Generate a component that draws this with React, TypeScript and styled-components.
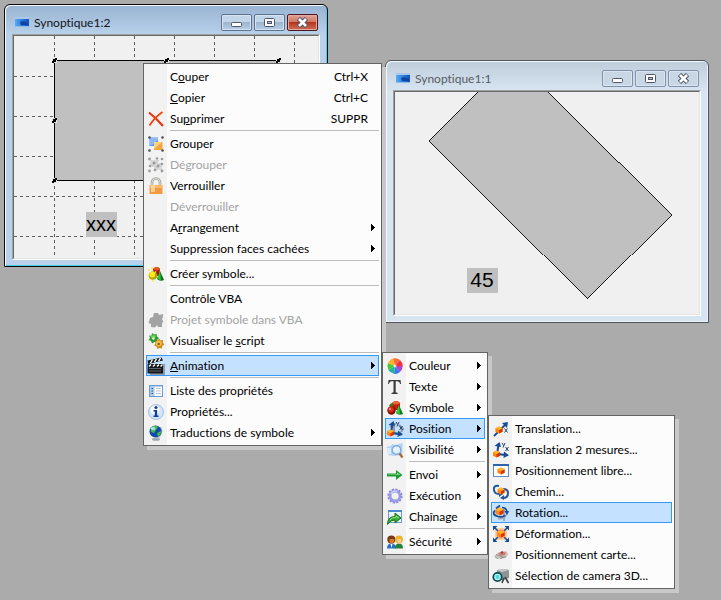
import React from "react";
import styled, { createGlobalStyle, css } from "styled-components";

const GlobalStyle = createGlobalStyle`
  *, *::before, *::after { box-sizing: border-box; }
  body {
    margin: 0;
    background: #ababab;
    color: #000;
    font-family: Lato, "Open Sans", sans-serif;
    font-size: 12px;
    line-height: 16px;
    font-variant-ligatures: none;
  }
  button { font: inherit; color: inherit; font-variant-ligatures: none; }
`;

const Desktop = styled.main`
  position: relative;
  min-height: 100vh;
  overflow: hidden;
`;

/* ---------- windows ---------- */

const WindowFrame = styled.section<{ $x: number; $y: number; $active?: boolean }>`
  position: absolute;
  left: ${(p) => p.$x}px;
  top: ${(p) => p.$y}px;
  display: flex;
  flex-direction: column;
  padding: 0 7px 6px;
  border: 1px solid ${(p) => (p.$active ? "#0a0a0a" : "#50545a")};
  border-radius: 6px 6px 0 0;
  ${(p) =>
    p.$active
      ? css`
          background: linear-gradient(#98b3d2, #b9d1ea 30px);
          box-shadow: inset 1px 1px 0 #f4f9fd, inset -1px -1px 0 #41cfe6;
        `
      : css`
          background: linear-gradient(#bfcddb, #d7e4f2 30px);
          box-shadow: inset 1px 1px 0 #f4f8fb, inset -1px -1px 0 #eef4fa;
        `}
`;

const TitleBar = styled.header<{ $active?: boolean }>`
  display: flex;
  align-items: center;
  gap: 4px;
  height: 29px;
  padding: 6px 2px 0;
  color: ${(p) => (p.$active ? "#101418" : "#565c64")};
`;

const Title = styled.h1`
  flex: 1;
  margin: 0;
  font-size: 12px;
  line-height: 16px;
  font-weight: 400;
`;

const WindowButtons = styled.div`
  display: flex;
  gap: 2px;
`;

const WindowButton = styled.button<{ $tone: "active" | "inactive" | "close" }>`
  display: grid;
  place-items: center;
  width: 31px;
  height: 17px;
  padding: 0;
  border-radius: 2px;
  ${(p) =>
    ({
      active: css`
        border: 1px solid #5d738f;
        background: linear-gradient(#c3d5e9 45%, #9db5d0 50%, #b7cee6);
        box-shadow: inset 0 0 0 1px #d5e3f2;
      `,
      inactive: css`
        border: 1px solid #8191ab;
        background: #c9d7e5;
        box-shadow: inset 0 0 0 1px #d9e5f0;
      `,
      close: css`
        border: 1px solid #4b1821;
        background: linear-gradient(#dfa497, #cf7866 45%, #b5351c 50%, #cf7055);
        box-shadow: inset 0 0 0 1px #e4aa9f;
      `,
    })[p.$tone]}
`;

const Client = styled.div`
  border: 1px solid;
  border-color: #a0a0a0 #fff #fff #a0a0a0;
`;

const Canvas = styled.svg`
  display: block;
  width: 306px;
  height: 224px;
  border: 1px solid;
  border-color: #696969 #e3e3e3 #e3e3e3 #696969;
  background: #f0f0f0;
`;

const CanvasText = styled.text`
  font-family: "Liberation Sans", Arial, sans-serif;
  text-anchor: middle;
`;

const AppIcon = () => (
  <svg width="16" height="16" viewBox="0 0 16 16" aria-hidden="true">
    <defs>
      <linearGradient id="app" x1="0" x2="1">
        <stop offset="0" stopColor="#5aacf0" />
        <stop offset=".5" stopColor="#2a7ddc" />
        <stop offset="1" stopColor="#1450b4" />
      </linearGradient>
    </defs>
    <path d="M1 2h14v10H1z" fill="#a8c8ec" />
    <path d="M1 4h14v7H1z" fill="url(#app)" />
    <path d="M6 7q4-2 8 1v2H7z" fill="#0f44a4" />
    <path d="M1 11.500h14" stroke="#8dbbe8" />
  </svg>
);

const WindowGlyph = ({ kind }: { kind: "min" | "max" | "close" }) => (
  <svg width="13" height="11" viewBox="0 0 13 11" aria-hidden="true">
    {kind === "min" && <rect x="1.5" y="5.5" width="10" height="4" rx="1" fill="#fff" stroke="#50566a" />}
    {kind === "max" && (
      <>
        <rect x="1.5" y="1.5" width="10" height="8" rx="1" fill="#fff" stroke="#50566a" />
        <rect x="4.5" y="4.5" width="4" height="2" fill="#a9bdd4" stroke="#50566a" />
      </>
    )}
    {kind === "close" && (
      <>
        <path d="M2.500 1.500l8 8M10.500 1.500l-8 8" stroke="#50566a" strokeWidth="4.600" />
        <path d="M3 2l7 7M10 2L3 9" stroke="#fff" strokeWidth="2.600" />
      </>
    )}
  </svg>
);

interface AppWindowProps {
  x: number;
  y: number;
  title: string;
  active?: boolean;
  children: React.ReactNode;
}

const AppWindow = ({ x, y, title, active, children }: AppWindowProps) => {
  const tone = active ? "active" : "inactive";
  return (
    <WindowFrame $x={x} $y={y} $active={active} aria-label={title}>
      <TitleBar $active={active}>
        <AppIcon />
        <Title>{title}</Title>
        <WindowButtons>
          <WindowButton $tone={tone} aria-label="Réduire">
            <WindowGlyph kind="min" />
          </WindowButton>
          <WindowButton $tone={tone} aria-label="Agrandir">
            <WindowGlyph kind="max" />
          </WindowButton>
          <WindowButton $tone={active ? "close" : "inactive"} aria-label="Fermer">
            <WindowGlyph kind="close" />
          </WindowButton>
        </WindowButtons>
      </TitleBar>
      <Client>{children}</Client>
    </WindowFrame>
  );
};

const Handle = ({ x, y }: { x: number; y: number }) => (
  <g>
    <rect x={x - 2} y={y - 2} width="5" height="5" fill="#e4e4e4" />
    <rect x={x - 1} y={y - 1} width="3" height="3" fill="#000" />
    <rect x={x + 1} y={y - 2} width="2" height="2" fill="#000" />
    <rect x={x - 2} y={y + 1} width="2" height="2" fill="#000" />
  </g>
);

const GRID = [40, 80, 120, 160, 200, 240, 280];

const EditorCanvas = () => (
  <Canvas>
    <g stroke="#5c5c5c" strokeDasharray="3 3">
      {GRID.map((v) => (
        <React.Fragment key={v}>
          <path d={`M${v + 0.5} 0V222`} />
          <path d={`M0 ${v + 0.5}H304`} />
        </React.Fragment>
      ))}
    </g>
    <rect x="40.5" y="24.5" width="224" height="120" fill="#c0c0c0" stroke="#000" />
    <Handle x={40} y={24} />
    <Handle x={152} y={24} />
    <Handle x={264} y={24} />
    <Handle x={40} y={84} />
    <Handle x={40} y={144} />
    <rect x="72" y="176" width="31" height="25" fill="#c0c0c0" />
    <CanvasText x="87" y="195" fontSize="20">xxx</CanvasText>
  </Canvas>
);

const RuntimeCanvas = () => (
  <Canvas>
    <path
      d="M34 48.500L117.500 -35L276.500 122.500L192.500 207z"
      fill="#c0c0c0"
      stroke="#000"
      strokeWidth="0.9"
      shapeRendering="crispEdges"
    />
    <rect x="72" y="176" width="31" height="25" fill="#c0c0c0" />
    <CanvasText x="87" y="195" fontSize="21">45</CanvasText>
  </Canvas>
);

/* ---------- menus ---------- */

const MenuPanel = styled.div<{ $x: number; $y: number; $width: number }>`
  position: absolute;
  left: ${(p) => p.$x}px;
  top: ${(p) => p.$y}px;
  width: ${(p) => p.$width}px;
  display: flex;
  flex-direction: column;
  padding: 2px;
  border: 1px solid #646464;
  background: linear-gradient(90deg, #f2f2f2 23px, #fcfcfc 23px);
  box-shadow: 4px 4px 0 #c8c8c8;
`;

const MenuItem = styled.button<{ $selected?: boolean }>`
  display: flex;
  align-items: center;
  height: 21px;
  padding: 0 3px 0 1px;
  border: 1px solid ${(p) => (p.$selected ? "#3399ff" : "transparent")};
  background: ${(p) => (p.$selected ? "#c4e1ff" : "transparent")};
  text-align: left;
  white-space: nowrap;
  &:disabled { color: #a3a3a3; }
`;

const IconSlot = styled.span`
  display: flex;
  width: 16px;
  height: 16px;
  margin-right: 6px;
`;

const Label = styled.span`
  flex: 1;
  u { text-underline-offset: 1px; }
`;

const Shortcut = styled.span`
  margin-right: 7px;
`;

const Separator = styled.hr`
  width: auto;
  height: 1px;
  margin: 1px 0 2px 24px;
  border: 0;
  background: #bdbdbd;
`;

const Arrow = () => (
  <svg width="4" height="7" viewBox="0 0 4 7" shapeRendering="crispEdges" aria-hidden="true">
    <path d="M0 0h1v1h1v1h1v1h1v1h-1v1h-1v1h-1v1h-1z" />
  </svg>
);

/* ---------- icons ---------- */

const Ball = ({ x, y, r = 3 }: { x: number; y: number; r?: number }) => (
  <>
    <path
      d={`M${x - r} ${y - r / 2}L${x} ${y - r}L${x + r} ${y - r / 2}V${y + r / 2}L${x} ${y + r}L${x - r} ${y + r / 2}z`}
      fill="#ff8410"
    />
    <path d={`M${x} ${y}L${x + r} ${y - r / 2}V${y + r / 2}L${x} ${y + r}z`} fill="#d83408" />
    <path d={`M${x - r} ${y - r / 2}L${x} ${y - r}L${x + r} ${y - r / 2}L${x} ${y}z`} fill="#ffb62c" />
  </>
);

const AxisLetter = ({ x, y, kind }: { x: number; y: number; kind: "x" | "y" }) => (
  <path
    d={kind === "x" ? `M${x} ${y}l3 4m0-4l-3 4` : `M${x} ${y}l1.500 2.500m1.500-2.500l-2 4.500`}
    stroke="#24406c"
    fill="none"
  />
);

const TwoAxes = ({ shadow }: { shadow?: boolean }) => (
  <>
    {shadow && (
      <path d="M5 4l4-1M7 5v7l8 2M12 4l4 4-2 3M3 6l3-2" stroke="#8f9aa8" strokeWidth="2.200" fill="none" />
    )}
    <path d="M4 12L5.500 3M4 12l9 1" stroke="#174c94" strokeWidth="2" fill="none" />
    <path d="M1.500 4L6.500 0 8 5zM11 9.500l5 3.800-5.500 2.700z" fill="#174c94" />
    <AxisLetter x={9} y={1} kind="y" />
    <AxisLetter x={12.5} y={5} kind="x" />
    <Ball x={3.5} y={12} r={3.5} />
  </>
);

const icons: Record<string, React.ReactNode> = {
  delete: (
    <>
      <path d="M1 1.500Q8 7 15 15" stroke="#e8360f" strokeWidth="2.200" fill="none" />
      <path d="M14.500 1Q6 7 1.500 14.500" stroke="#f0430f" strokeWidth="1.800" fill="none" />
    </>
  ),
  group: (
    <>
      <rect x="1.500" y="1.500" width="8.500" height="8.500" fill="#5c94f0" />
      <path d="M2 2h8v2L4 9H2z" fill="#8fb8fa" />
      <rect x="6" y="6" width="8.500" height="8" fill="#f3a63e" />
      <path d="M6 6h8L6 13z" fill="#ffd583" />
      <g fill="#4c4f55">
        <circle cx="1.500" cy="1.500" r="1.300" />
        <circle cx="14.500" cy="1.500" r="1.300" />
        <circle cx="1.500" cy="14.500" r="1.300" />
        <circle cx="14.500" cy="14.500" r="1.300" />
      </g>
    </>
  ),
  ungroup: (
    <>
      <path d="M2 3h8v7H2zM6 6h8v7H6z" fill="#d8d8d8" />
      <path d="M4 9l7-6M7 12l6-6" stroke="#c4c4c4" />
      <g fill="#9c9c9c">
        <circle cx="1.500" cy="2" r="1.400" />
        <circle cx="9" cy="1.500" r="1.300" />
        <circle cx="14" cy="2" r="1.300" />
        <circle cx="2" cy="9" r="1.300" />
        <circle cx="6" cy="6" r="1.500" />
        <circle cx="10" cy="9" r="1.500" />
        <circle cx="14" cy="7" r="1.300" />
        <circle cx="1.500" cy="14" r="1.400" />
        <circle cx="7" cy="13" r="1.300" />
        <circle cx="14" cy="14" r="1.400" />
      </g>
    </>
  ),
  lock: (
    <>
      <path d="M4 8V4.500a4 4 0 0 1 8 0V8" stroke="#a2a29f" strokeWidth="2.600" fill="none" />
      <path d="M4 8V4.500a4 4 0 0 1 8 0V8" stroke="#deded8" fill="none" />
      <path d="M1.500 7h13v9h-13z" fill="#f09a42" />
      <path d="M2 7h12v3H2z" fill="#fbb968" />
      <path d="M3 7h4v7H3z" fill="#ffdba6" opacity=".8" />
    </>
  ),
  createSymbol: (
    <>
      <path d="M5 3q4-4 7 0l-1 7H6z" fill="#a01408" />
      <path d="M5 3q4-4 7 0-3 3-7 0z" fill="#e45a20" />
      <path d="M12 5l4 9q-4 2-7-1z" fill="#0c6e1c" />
      <path d="M12 5l-3 8 4 1z" fill="#2fc438" />
      <circle cx="5" cy="9.500" r="4.300" fill="#b3a200" />
      <circle cx="4.300" cy="8.500" r="2.900" fill="#fbe824" />
      <path d="M0 3l2 2M4 1v3M-.5 9h2M0 14l2-2M5 16v-2M8 5L7 7" stroke="#f5e61a" />
    </>
  ),
  puzzle: (
    <path
      d="M2 6l3-1 1-4h4l1 2 4-1v3l-1 2 1.500 3-1.500 1v4h-4l-1-2-2 2.500-4-.5v-3l-2.500-1 1-3z"
      fill="#a3a3a3"
    />
  ),
  script: (
    <>
      <path d="M4 0l2 1.500L8.500 1l.5 2.500 2 1.500-2 2v2.500L6.500 9 4 10.500 3 8 .5 7 2 5 1 2.500l2.500.2z" fill="#2c9a30" />
      <path d="M2.500 3.500l3-1.500 3 1-4 3.500z" fill="#74cf62" />
      <path d="M11 5.500l1.500 2 2.500-.5-.2 2.600 1.500 1.900-2 1.400-.3 2.500-2.500-.5L9.500 16l-1-2.500L6 12.500l1.500-2L7 8l2.500-.4z" fill="#cf8c1c" />
      <circle cx="10.700" cy="10.500" r="2.800" fill="#f2c24c" />
      <circle cx="10.700" cy="11" r="1.300" fill="#9c6210" />
      <circle cx="5.500" cy="5.500" r="1.200" fill="#e6f2e2" />
    </>
  ),
  clapper: (
    <>
      <path d="M2 6h15v11H2z" fill="#8d99a8" />
      <path d="M-.5 6h15.500v9.500H-.5z" fill="#16181a" />
      <path d="M-.5 2.500l14-3 1.500 3-15 3.500z" fill="#16181a" />
      <path d="M2.500 5L4.500 1.500M6.500 4.200L8.500 .8M10.500 3.300L12.500 0M1 8.500l2-2M5 8.500l2-2M9 8.500l2-2M12.500 8.500l2-2" stroke="#fff" strokeWidth="1.400" />
      <path d="M1 10.500h12M1 13h12" stroke="#5d6268" />
    </>
  ),
  list: (
    <>
      <rect x="1.500" y="2.500" width="13" height="11" fill="#fff" stroke="#6c9bcf" />
      <path d="M1 2h14v1.500H1z" fill="#6c9fd4" />
      <path d="M2 3.500h4.500V13H2z" fill="#a9cbec" />
      <path d="M3.500 5.500h1.500M3.500 8h1.500M3.500 10.500h1.500" stroke="#2a5c9c" />
      <path d="M8 5.500h5M8 8h5M8 10.500h5" stroke="#b9c8d8" />
    </>
  ),
  info: (
    <>
      <circle cx="8" cy="8" r="7.500" fill="#d3e4f8" stroke="#a5bfe0" />
      <circle cx="7" cy="6" r="4.500" fill="#fff" />
      <circle cx="8" cy="3.500" r="1.600" fill="#123fa0" />
      <path d="M5.500 6H9.200v5.500h1.300V13H5.500v-1.500h1.300v-4H5.500z" fill="#123fa0" />
    </>
  ),
  globe: (
    <>
      <ellipse cx="8" cy="14.300" rx="4" ry="1.500" fill="#9fa5ad" />
      <path d="M12.500 2a7.500 7.500 0 0 1-5 11.500" stroke="#b0b5bc" strokeWidth="1.200" fill="none" />
      <circle cx="7.500" cy="6.500" r="6" fill="#1348b4" />
      <path d="M3 3Q6-1 10 2L8 5 6 8 3 7zM9 8l4-2q0 4-3 6z" fill="#42bb45" />
      <ellipse cx="5" cy="3.500" rx="2.400" ry="1.800" fill="#b8ecf4" opacity=".8" />
    </>
  ),
  color: (
    <>
      <path d="M8 8L6 .5Q10-.5 13 2z" fill="#ff6a3c" />
      <path d="M8 8l5-6q3 3 2.800 6z" fill="#f4303c" />
      <path d="M8 8h7.800q-.4 4-3 6z" fill="#b045c8" />
      <path d="M8 8l5 6q-3 2.500-6 1.800z" fill="#3b78ec" />
      <path d="M8 8l-1 7.800Q3 15 1.400 12z" fill="#22b59c" />
      <path d="M8 8l-6.600 4Q-.4 8 1 5z" fill="#46c63a" />
      <path d="M8 8L1 5Q3 1 6 .5z" fill="#ffb32c" />
      <circle cx="8" cy="8" r="1.500" fill="#fff" opacity=".7" />
    </>
  ),
  text: <path d="M1.500 1h12l.5 4h-.8Q12.500 2.300 10.500 2.200H8.700V13.200l2 .8v1H4.500v-1l2-.8V2.200H4.500Q2.500 2.300 1.900 5h-.8z" fill="#3c3c3e" />,
  symbol: (
    <>
      <path d="M5 3q4-4 8 0v7H6z" fill="#c81a0c" />
      <path d="M5 3q4-4 8 0-4 3-8 0z" fill="#f0643c" />
      <path d="M12 5l4 9q-4 2-7-1z" fill="#0c7a20" />
      <path d="M12 5l-3 8 4 1z" fill="#34c83c" />
      <path d="M2 6q1-3 4-3v5z" fill="#3c7a14" />
      <circle cx="4.500" cy="10.500" r="4.200" fill="#8c100a" />
      <circle cx="4" cy="9.500" r="2.800" fill="#d42e1c" />
      <circle cx="3" cy="9" r="1" fill="#ff9c80" />
    </>
  ),
  position: <TwoAxes shadow />,
  visibility: (
    <>
      <path d="M-.5 5l4-1 2-2 3 1 7-2v12l-9 1-5-1z" fill="#b4d3f4" />
      <path d="M0 6h4v6H1z" fill="#dcebfb" />
      <circle cx="9.500" cy="8" r="4.300" fill="#e2f2ff" stroke="#82acd8" strokeWidth="1.400" />
      <path d="M12.500 11.500l3 4" stroke="#b06830" strokeWidth="2.200" />
    </>
  ),
  send: (
    <>
      <path d="M0 6.500h9V3l6.500 5L9 13V9.500H0z" fill="#1d9c35" />
      <path d="M1 7.500h9V5.500L13.500 8H1z" fill="#86dd8c" />
    </>
  ),
  gear: (
    <>
      <circle cx="8" cy="8" r="6.600" fill="none" stroke="#8a8ad0" strokeWidth="2" strokeDasharray="2.200 1.256" />
      <circle cx="8" cy="8" r="5" fill="none" stroke="#9a9be4" strokeWidth="2.800" />
      <path d="M4 6a4.600 4.600 0 0 1 6-2.500" fill="none" stroke="#ced0fb" strokeWidth="1.500" />
    </>
  ),
  chain: (
    <>
      <rect x="1.500" y="1.500" width="13" height="12" fill="#edf5fd" stroke="#6f9acb" />
      <path d="M1 1h14v2H1z" fill="#4f88cc" />
      <path d="M.5 15.500q0-8 7.500-8V4l6 5-6 5v-3q-4-.5-7.500 4.500z" fill="#35ab31" stroke="#14701b" />
      <path d="M3 11q2-3 6-2.500V7l3 2" stroke="#9de588" fill="none" />
    </>
  ),
  security: (
    <>
      <path d="M0 14.500q0-5 4.500-5t4.500 5z" fill="#286fc8" />
      <circle cx="4.300" cy="5.500" r="4" fill="#783818" />
      <path d="M2.500 5h4.500v3q-2 3-4.500 0z" fill="#d87830" />
      <path d="M8 14.500q0-5 4-5t4 5z" fill="#208438" />
      <circle cx="12" cy="5.500" r="3.900" fill="#edb42b" />
      <path d="M10.500 5H14v3q-2 3-3.500 0z" fill="#f4cf96" />
      <path d="M3.500 10h2l-1 4z" fill="#fff" />
    </>
  ),
  translation: (
    <>
      <path d="M1 15L12 4" stroke="#174c94" strokeWidth="1.800" />
      <path d="M9 2l6-1-1 6z" fill="#174c94" />
      <Ball x={6} y={9} r={3.6} />
      <AxisLetter x={11.5} y={7.5} kind="x" />
    </>
  ),
  translation2: <TwoAxes />,
  freePosition: (
    <>
      <rect x=".5" y="1.500" width="15" height="12" fill="#fff" stroke="#5f8cc2" />
      <path d="M0 1h16v2H0z" fill="#2f64a8" />
      <Ball x={8} y={8} r={3.6} />
    </>
  ),
  path: (
    <>
      <path d="M6 2Q0 1 1 6q.5 4 5 4M10 5q5 0 5 4 0 5-5 5" stroke="#23569b" strokeWidth="2" fill="none" />
      <path d="M6 6.500l4 3.500-4 3zM11 11l-4 3 4 2z" fill="#23569b" />
      <Ball x={8} y={7} r={3.5} />
    </>
  ),
  rotation: (
    <>
      <path d="M5 13.500q7 1 10-7M11 4v12" stroke="#9fa8b4" strokeWidth="2" fill="none" />
      <path d="M2 5.500q-4 4 3 6 4 1 7-1" stroke="#174c94" strokeWidth="1.800" fill="none" />
      <path d="M9 2.500q4 0 5 4M3 3.500L7 .5" stroke="#174c94" strokeWidth="1.600" fill="none" />
      <path d="M11.500 6H16l-2 4z" fill="#174c94" />
      <Ball x={6.5} y={6.5} r={4} />
    </>
  ),
  deformation: (
    <>
      <rect x="2" y="2" width="12" height="12" rx="2" fill="#ffcfa4" />
      <path d="M2 2l12 12M14 2L2 14" stroke="#174c94" strokeWidth="1.500" />
      <path d="M0 0h4.500L0 4.500zM11.500 0H16v4.500zM0 11.500V16h4.500zM16 11.500V16h-4.500z" fill="#174c94" />
      <circle cx="8" cy="8" r="4.600" fill="#ff9a5c" />
      <Ball x={8} y={8} r={3.6} />
    </>
  ),
  map: (
    <>
      <path d="M1 9l5-4 7-1 2.500 3-3 4-7 1z" fill="#c9c7c4" />
      <path d="M2 10l3 1.500M3 7.500l8 3M7 11.500l6-2" stroke="#8f8f8c" />
      <path d="M5 6.500l4-2 4 1-1 2.500-4 1z" fill="#d07a70" />
      <circle cx="9" cy="5.500" r="1.200" fill="#9a4a42" />
    </>
  ),
  camera: (
    <>
      <path d="M4 2l8-1 4 1v8l-6 2H4z" fill="#8f9496" />
      <path d="M4 2l8-1 4 1-7 2z" fill="#c7cacb" />
      <path d="M12 9l3.500 6M11 10l-2 5" stroke="#3c3f40" strokeWidth="1.600" />
      <circle cx="4.500" cy="9" r="4.200" fill="#c6fbfb" stroke="#0c4c54" strokeWidth="1.800" />
      <circle cx="4.500" cy="9" r="2.200" fill="#52dcdf" />
    </>
  ),
};

const Icon = ({ name }: { name: string }) => (
  <svg width="16" height="16" viewBox="0 0 16 16" overflow="visible" aria-hidden="true">
    {icons[name]}
  </svg>
);

/* ---------- menu data ---------- */

interface Entry {
  label: React.ReactNode;
  icon?: string;
  shortcut?: string;
  submenu?: boolean;
  disabled?: boolean;
  selected?: boolean;
}

const contextMenu: Entry[][] = [
  [
    { label: <>C<u>o</u>uper</>, shortcut: "Ctrl+X" },
    { label: <><u>C</u>opier</>, shortcut: "Ctrl+C" },
    { label: <>Su<u>p</u>primer</>, shortcut: "SUPPR", icon: "delete" },
  ],
  [
    { label: "Grouper", icon: "group" },
    { label: "Dégrouper", icon: "ungroup", disabled: true },
    { label: "Verrouiller", icon: "lock" },
    { label: "Déverrouiller", disabled: true },
    { label: <>A<u>r</u>rangement</>, submenu: true },
    { label: "Suppression faces cachées", submenu: true },
  ],
  [{ label: "Créer symbole...", icon: "createSymbol" }],
  [
    { label: "Contrôle VBA" },
    { label: "Projet symbole dans VBA", icon: "puzzle", disabled: true },
    { label: <>Visualiser le <u>s</u>cript</>, icon: "script" },
  ],
  [{ label: <><u>A</u>nimation</>, icon: "clapper", submenu: true, selected: true }],
  [
    { label: "Liste des propriétés", icon: "list" },
    { label: "Propriétés...", icon: "info" },
    { label: "Traductions de symbole", icon: "globe", submenu: true },
  ],
];

const animationMenu: Entry[][] = [
  [
    { label: "Couleur", icon: "color", submenu: true },
    { label: "Texte", icon: "text", submenu: true },
    { label: "Symbole", icon: "symbol", submenu: true },
    { label: "Position", icon: "position", submenu: true, selected: true },
    { label: "Visibilité", icon: "visibility", submenu: true },
  ],
  [
    { label: "Envoi", icon: "send", submenu: true },
    { label: "Exécution", icon: "gear", submenu: true },
    { label: "Chaînage", icon: "chain", submenu: true },
  ],
  [{ label: "Sécurité", icon: "security", submenu: true }],
];

const positionMenu: Entry[][] = [
  [
    { label: "Translation...", icon: "translation" },
    { label: "Translation 2 mesures...", icon: "translation2" },
    { label: "Positionnement libre...", icon: "freePosition" },
    { label: "Chemin...", icon: "path" },
    { label: "Rotation...", icon: "rotation", selected: true },
    { label: "Déformation...", icon: "deformation" },
    { label: "Positionnement carte...", icon: "map" },
    { label: "Sélection de camera 3D...", icon: "camera" },
  ],
];

interface MenuProps {
  x: number;
  y: number;
  width: number;
  name: string;
  groups: Entry[][];
}

const Menu = ({ x, y, width, name, groups }: MenuProps) => (
  <MenuPanel $x={x} $y={y} $width={width} role="menu" aria-label={name}>
    {groups.map((group, g) => (
      <React.Fragment key={g}>
        {g > 0 && <Separator />}
        {group.map((item, i) => (
          <MenuItem
            key={i}
            role="menuitem"
            aria-haspopup={item.submenu ? "menu" : undefined}
            disabled={item.disabled}
            $selected={item.selected}
          >
            <IconSlot>{item.icon && <Icon name={item.icon} />}</IconSlot>
            <Label>{item.label}</Label>
            {item.shortcut && <Shortcut>{item.shortcut}</Shortcut>}
            {item.submenu && <Arrow />}
          </MenuItem>
        ))}
      </React.Fragment>
    ))}
  </MenuPanel>
);

export default function App() {
  return (
    <>
      <GlobalStyle />
      <Desktop>
        <AppWindow x={4} y={4} title="Synoptique1:2" active>
          <EditorCanvas />
        </AppWindow>
        <AppWindow x={385} y={60} title="Synoptique1:1">
          <RuntimeCanvas />
        </AppWindow>
        <Menu x={143} y={63} width={239} name="Édition" groups={contextMenu} />
        <Menu x={382} y={352} width={106} name="Animation" groups={animationMenu} />
        <Menu x={488} y={415} width={187} name="Position" groups={positionMenu} />
      </Desktop>
    </>
  );
}
